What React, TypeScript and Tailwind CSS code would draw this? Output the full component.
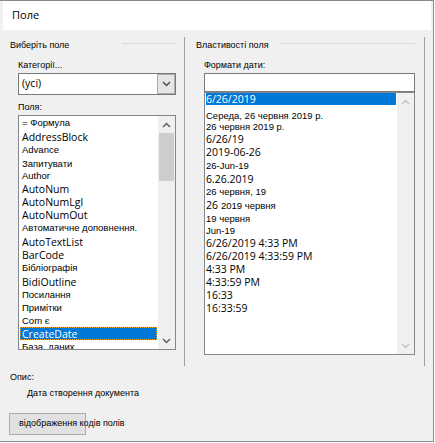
import React from "react";

const sm = "[font-family:'Liberation_Sans',Arial,sans-serif] text-[9px]";
const smList = "[font-family:'Liberation_Sans',Arial,sans-serif] text-[9.5px]";
const lg = "[font-family:'Open_Sans','Noto_Sans',sans-serif] text-[10.5px]";

type Item = { text: React.ReactNode; big: boolean; h: string; extra?: string };

const fields: Item[] = [
  { text: "= Формула", big: false, h: "h-[14px]" },
  { text: "AddressBlock", big: true, h: "h-[13px]" },
  { text: "Advance", big: false, h: "h-[14px]" },
  { text: "Запитувати", big: false, h: "h-[13px]" },
  { text: "Author", big: false, h: "h-[12px]" },
  { text: "AutoNum", big: true, h: "h-[13px]" },
  { text: "AutoNumLgl", big: true, h: "h-[13px]" },
  { text: "AutoNumOut", big: true, h: "h-[13px]" },
  { text: "Автоматичне доповнення.", big: false, h: "h-[14px]" },
  { text: "AutoTextList", big: true, h: "h-[13px]" },
  { text: "BarCode", big: true, h: "h-[13px]" },
  { text: "Бібліографія", big: false, h: "h-[14px]" },
  { text: "BidiOutline", big: true, h: "h-[13px]" },
  { text: "Посилання", big: false, h: "h-[13px]" },
  { text: "Примітки", big: false, h: "h-[14px]" },
  { text: "Com є", big: false, h: "h-[12px]" },
  { text: "CreateDate", big: true, h: "h-[13px]" },
  { text: "База_даних", big: false, h: "h-[13px]" },
];

const formats: Item[] = [
  { text: "6/26/2019", big: true, h: "h-[12px]" },
  { text: "Середа, 26 червня 2019 р.", big: false, h: "h-[16px]", extra: "pt-[5px]" },
  { text: "26 червня 2019 р.", big: false, h: "h-[11px]" },
  { text: "6/26/19", big: true, h: "h-[13px]" },
  { text: "2019-06-26", big: true, h: "h-[14px]" },
  { text: "26-Jun-19", big: false, h: "h-[13px]" },
  { text: "6.26.2019", big: true, h: "h-[13px]" },
  { text: "26 червня, 19", big: false, h: "h-[13px]" },
  {
    text: (
      <>
        <span className={lg}>26</span>
        <span className={`${smList} ml-[3px] mt-[2px]`}>2019 червня</span>
      </>
    ),
    big: false,
    h: "h-[14px]",
  },
  { text: "19 червня", big: false, h: "h-[13px]" },
  { text: "Jun-19", big: false, h: "h-[12px]" },
  { text: "6/26/2019 4:33 PM", big: true, h: "h-[12px]" },
  { text: "6/26/2019 4:33:59 PM", big: true, h: "h-[13px]" },
  { text: "4:33 PM", big: true, h: "h-[13px]" },
  { text: "4:33:59 PM", big: true, h: "h-[13px]" },
  { text: "16:33", big: true, h: "h-[13px]" },
  { text: "16:33:59", big: true, h: "h-[13px]" },
];

function Chevron({ up, color }: { up?: boolean; color: string }) {
  return (
    <svg width="9" height="6" viewBox="0 0 9 6">
      <polyline
        points={up ? "1,5 4.5,1.5 8,5" : "1,1 4.5,4.5 8,1"}
        fill="none"
        stroke={color}
        strokeWidth="1.5"
      />
    </svg>
  );
}

function ScrollBar({ thumb, color }: { thumb: boolean; color: string }) {
  return (
    <div className="w-[17px] h-full bg-[#f0f0f0] flex flex-col">
      <div className="h-[17px] flex items-center justify-center">
        <Chevron up color={color} />
      </div>
      <div className="flex-1">
        {thumb && <div className="h-[48px] mx-px bg-[#cdcdcd]" />}
      </div>
      <div className="h-[17px] flex items-center justify-center">
        <Chevron color={color} />
      </div>
    </div>
  );
}

export default function App() {
  return (
    <div className="w-[434px] h-[442px] bg-[#f0f0f0] border-t border-r border-b border-[#8a8a8a] flex flex-col text-black overflow-hidden">
      <div className={`h-[29px] ml-[3px] mr-[2px] bg-white flex items-center pl-[9px] ${lg} text-[11px]`}>
        Поле
      </div>

      <div className="flex h-[329px] mt-[7px]">
        {/* left column */}
        <div className="w-[176px] pl-[10px] flex flex-col">
          <div className="flex items-start h-[16px]">
            <span className={`${sm} leading-[16px]`}>Виберіть поле</span>
            <div className="ml-auto mt-[6px] w-[54px] h-px bg-[#d9d9d9]" />
          </div>
          <div className="pl-[8px] flex flex-col">
            <div className={`${sm} leading-[16px] mt-[4px]`}>Категорії...</div>
            <div className="w-[158px] h-[22px] border border-[#7a7a7a] bg-white flex items-center">
              <span className={`${lg} flex-1 pl-[3px]`}>(усі)</span>
              <div className="w-[18px] h-full bg-[#e5e5e5] border border-[#adadad] flex items-center justify-center">
                <Chevron color="#505050" />
              </div>
            </div>
            <div className={`${sm} leading-[16px] mt-[4px]`}>Поля:</div>
            <div className="w-[158px] h-[235px] border border-[#828790] bg-white flex overflow-hidden">
              <div className="flex-1 flex flex-col">
                {fields.map((f, i) => {
                  const sel = f.text === "CreateDate";
                  return (
                    <div
                      key={i}
                      className={`${f.h} shrink-0 mx-px pl-[2px] flex items-center whitespace-nowrap leading-[12px] ${f.big ? lg : smList} ${
                        sel ? "bg-[#0078d7] text-white outline outline-1 outline-dotted outline-[#f5a623] -outline-offset-1" : ""
                      }`}
                    >
                      {f.text}
                    </div>
                  );
                })}
              </div>
              <ScrollBar thumb color="#606060" />
            </div>
          </div>
        </div>

        <div className="ml-[8px] w-px h-full bg-[#a0a0a0]" />

        {/* right column */}
        <div className="w-[239px] pl-[11px] pr-[9px] flex flex-col">
          <div className="flex items-start h-[16px]">
            <span className={`${sm} leading-[16px]`}>Властивості поля</span>
            <div className="flex-1 ml-[11px] mt-[6px] h-px bg-[#d9d9d9]" />
          </div>
          <div className="pl-[8px] flex flex-col">
            <div className={`${sm} leading-[16px] mt-[4px]`}>Формати дати:</div>
            <div className="w-[211px] h-[19px] border border-[#7a7a7a] bg-white" />
            <div className="w-[211px] h-[263px] border border-[#828790] bg-white flex overflow-hidden">
              <div className="flex-1 flex flex-col">
                {formats.map((f, i) => (
                  <div
                    key={i}
                    className={`${f.h} ${f.extra ?? ""} shrink-0 mx-px flex items-center whitespace-nowrap leading-[12px] ${f.big ? lg : smList} ${
                      i === 0 ? "bg-[#0078d7] text-white" : ""
                    }`}
                  >
                    {f.text}
                  </div>
                ))}
              </div>
              <ScrollBar thumb={false} color="#c2c2c2" />
            </div>
          </div>
        </div>

        <div className="w-px h-full bg-[#a0a0a0]" />
      </div>

      <div className="pl-[10px] flex flex-col">
        <div className={`${sm} leading-[16px] mt-[3px]`}>Опис:</div>
        <div className={`${sm} leading-[16px] pl-[17px]`}>Дата створення документа</div>
        <div className={`mt-[12px] -ml-px w-[77px] h-[22px] border border-[#adadad] bg-[#e1e1e1] flex items-center pl-[9px] whitespace-nowrap ${sm}`}>
          відображення кодів полів
        </div>
      </div>
    </div>
  );
}
